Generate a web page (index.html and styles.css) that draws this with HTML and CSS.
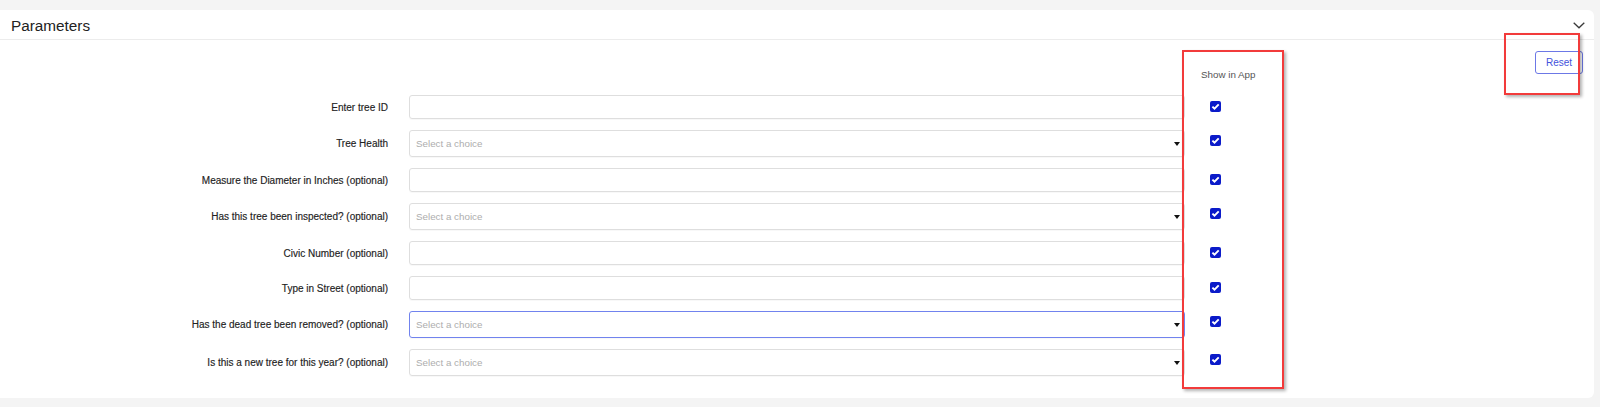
FILE: index.html
```html
<!DOCTYPE html>
<html>
<head>
<meta charset="utf-8">
<link rel="stylesheet" href="styles.css">
</head>
<body>
<div class="card">
  <div class="card-header">
    <span class="title">Parameters</span>
    <svg class="chevron" width="12" height="7" viewBox="0 0 12 7"><path d="M0.7 0.7 L6 5.8 L11.3 0.7" fill="none" stroke="#3a3a3a" stroke-width="1.3"/></svg>
  </div>
  <div class="card-body">
    <div class="form-grid">
      <div class="head-spacer"></div>
      <div class="head-spacer"></div>
      <div class="head-show">Show in App</div>

      <div class="label">Enter tree ID</div>
      <div class="field text"></div>
      <div class="check-cell"><span class="check"><svg width="11" height="11" viewBox="0 0 11 11"><path d="M2.4 5.6 L4.5 7.7 L8.7 3.3" fill="none" stroke="#fff" stroke-width="1.9"/></svg></span></div>

      <div class="label">Tree Health</div>
      <div class="field select"><span class="ph">Select a choice</span><span class="caret"></span></div>
      <div class="check-cell sel"><span class="check"><svg width="11" height="11" viewBox="0 0 11 11"><path d="M2.4 5.6 L4.5 7.7 L8.7 3.3" fill="none" stroke="#fff" stroke-width="1.9"/></svg></span></div>

      <div class="label">Measure the Diameter in Inches (optional)</div>
      <div class="field text"></div>
      <div class="check-cell"><span class="check"><svg width="11" height="11" viewBox="0 0 11 11"><path d="M2.4 5.6 L4.5 7.7 L8.7 3.3" fill="none" stroke="#fff" stroke-width="1.9"/></svg></span></div>

      <div class="label">Has this tree been inspected? (optional)</div>
      <div class="field select"><span class="ph">Select a choice</span><span class="caret"></span></div>
      <div class="check-cell sel"><span class="check"><svg width="11" height="11" viewBox="0 0 11 11"><path d="M2.4 5.6 L4.5 7.7 L8.7 3.3" fill="none" stroke="#fff" stroke-width="1.9"/></svg></span></div>

      <div class="label">Civic Number (optional)</div>
      <div class="field text"></div>
      <div class="check-cell"><span class="check"><svg width="11" height="11" viewBox="0 0 11 11"><path d="M2.4 5.6 L4.5 7.7 L8.7 3.3" fill="none" stroke="#fff" stroke-width="1.9"/></svg></span></div>

      <div class="label">Type in Street (optional)</div>
      <div class="field text"></div>
      <div class="check-cell"><span class="check"><svg width="11" height="11" viewBox="0 0 11 11"><path d="M2.4 5.6 L4.5 7.7 L8.7 3.3" fill="none" stroke="#fff" stroke-width="1.9"/></svg></span></div>

      <div class="label">Has the dead tree been removed? (optional)</div>
      <div class="field select focused"><span class="ph">Select a choice</span><span class="caret"></span></div>
      <div class="check-cell sel"><span class="check"><svg width="11" height="11" viewBox="0 0 11 11"><path d="M2.4 5.6 L4.5 7.7 L8.7 3.3" fill="none" stroke="#fff" stroke-width="1.9"/></svg></span></div>

      <div class="label">Is this a new tree for this year? (optional)</div>
      <div class="field select"><span class="ph">Select a choice</span><span class="caret"></span></div>
      <div class="check-cell sel"><span class="check"><svg width="11" height="11" viewBox="0 0 11 11"><path d="M2.4 5.6 L4.5 7.7 L8.7 3.3" fill="none" stroke="#fff" stroke-width="1.9"/></svg></span></div>
    </div>
    <div class="actions">
      <button class="reset">Reset</button>
    </div>
  </div>
  <div class="mark mark-show"></div>
  <div class="mark mark-reset"></div>
</div>
</body>
</html>
```
FILE: styles.css
```css
html, body {
  margin: 0;
  padding: 0;
}
body {
  background: #f4f4f4;
  font-family: "Liberation Sans", Arial, sans-serif;
  height: 407px;
  overflow: hidden;
}
.card {
  position: relative;
  margin: 10px 6px 0 0;
  background: #fff;
  border-radius: 0 6px 6px 0;
  height: 388px;
  box-sizing: border-box;
}
.card-header {
  height: 29px;
  border-bottom: 1px solid #ececec;
  display: flex;
  align-items: center;
  justify-content: space-between;
  padding: 0 9px 0 11px;
}
.title {
  font-size: 15.3px;
  color: #222;
  line-height: 29px;
  padding-top: 1px;
}
.chevron {
  display: block;
  margin-top: 1px;
}
.card-body {
  display: flex;
  align-items: flex-start;
}
.form-grid {
  display: grid;
  grid-template-columns: 409px 776px 100px;
  row-gap: 11px;
  flex: none;
}
.head-spacer {
  height: 44px;
}
.head-show {
  height: 44px;
  box-sizing: border-box;
  padding: 28px 0 0 16px;
  line-height: 14px;
  font-size: 9.8px;
  color: #555;
}
.label {
  display: flex;
  align-items: center;
  justify-content: flex-end;
  padding-right: 21px;
  font-size: 10px;
  color: #222;
  -webkit-text-stroke: 0.15px #222;
}
.field {
  border: 1px solid #dedede;
  border-radius: 3px;
  box-sizing: border-box;
  display: flex;
  align-items: center;
  padding: 0 4px 0 6px;
  box-shadow: 0 1px 1px rgba(0,0,0,0.03);
}
.field.text {
  height: 24px;
}
.field.select {
  height: 27px;
  justify-content: space-between;
}
.field.focused {
  border-color: #7183ee;
}
.ph {
  font-size: 9.8px;
  color: #adadad;
}
.caret {
  width: 0;
  height: 0;
  border-left: 3px solid transparent;
  border-right: 3px solid transparent;
  border-top: 4px solid #111;
  margin-top: 1px;
}
.check-cell {
  padding: 6px 0 0 25px;
}
.check-cell.sel {
  padding-top: 5px;
}
.check {
  display: block;
  width: 11px;
  height: 11px;
  background: #0b1bc9;
  border-radius: 2px;
}
.check svg {
  display: block;
}
.actions {
  margin-left: auto;
  padding: 11px 11px 0 0;
}
.reset {
  width: 48px;
  height: 23px;
  border: 1px solid #6c78e6;
  border-radius: 3px;
  background: #fff;
  color: #4452dc;
  font-family: "Liberation Sans", Arial, sans-serif;
  font-size: 10px;
  padding: 0;
}
.mark {
  position: absolute;
  box-sizing: border-box;
  border: 2px solid #f23b3b;
  box-shadow: 2px 2px 3px rgba(0,0,0,0.3);
}
.mark-show {
  left: 1182px;
  top: 40px;
  width: 102px;
  height: 339px;
}
.mark-reset {
  left: 1504px;
  top: 23px;
  width: 76px;
  height: 62px;
}
```
